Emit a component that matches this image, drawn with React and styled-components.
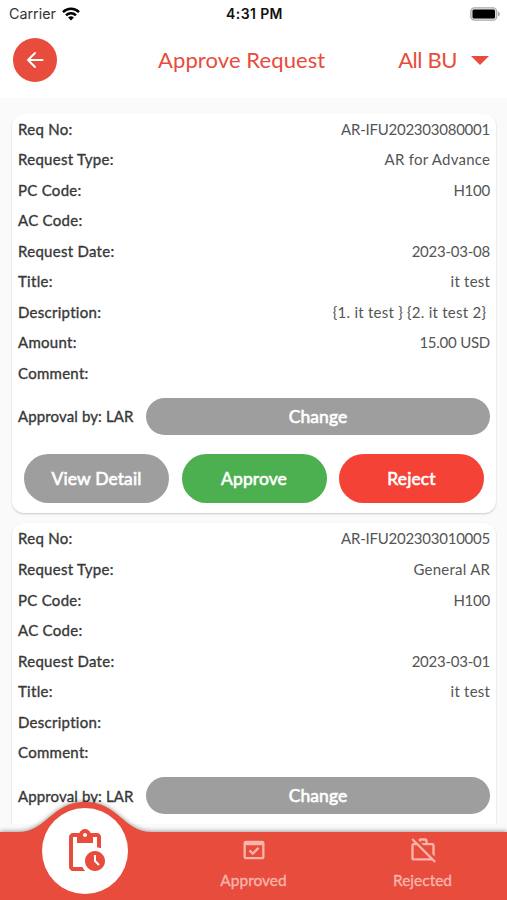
import { styled, createGlobalStyle } from "styled-components"
import { MdOutlinePendingActions, MdOutlineDomainVerification, MdOutlineWorkOff } from "react-icons/md"

const GlobalStyle = createGlobalStyle`
    * {
        box-sizing: border-box;
    }
    body {
        margin: 0;
        background: #fafafa;
        font-family: Lato, "Open Sans", sans-serif;
    }
`
const Screen = styled.div`
    height: 900px;
    width: 507px;
    display: flex;
    flex-direction: column;
    overflow: hidden;
    background: #fafafa;
`
const StatusBar = styled.div`
    height: 27px;
    flex-shrink: 0;
    display: grid;
    grid-template-columns: 1fr auto 1fr;
    align-items: center;
    padding: 0 7px 0 9px;
    background: #fff;
    font-family: Inter, "Liberation Sans", sans-serif;
    font-size: 14px;
    color: #111;
`
const Carrier = styled.div`
    display: flex;
    align-items: center;
    gap: 6px;
    font-size: 14.3px;
    color: #333;
`
const Clock = styled.div`
    font-weight: 600;
    font-size: 14px;
    letter-spacing: .4px;
`
const Battery = styled.svg`
    justify-self: end;
`
const Header = styled.header`
    height: 71px;
    flex-shrink: 0;
    display: grid;
    grid-template-columns: 145px 1fr auto;
    align-items: center;
    padding: 0 18px 5px 13px;
    background: #fff;
    color: #e74c3c;
    font-size: 22px;
`
const BackButton = styled.button`
    width: 44px;
    height: 44px;
    border: 0;
    padding: 0;
    border-radius: 50%;
    background: #e74c3c;
    display: flex;
    align-items: center;
    justify-content: center;
`
const Title = styled.div`
    letter-spacing: .1px;
    padding-bottom: 2px;
`
const UnitSelect = styled.div`
    display: flex;
    align-items: center;
    gap: 14px;
    letter-spacing: -.4px;
    span {
        padding-bottom: 2px;
    }
`
const List = styled.main`
    height: 726px;
    flex-shrink: 0;
    overflow: hidden;
    padding: 15.5px 11px 0 12px;
    display: flex;
    flex-direction: column;
    gap: 10px;
`
const Card = styled.section`
    flex-shrink: 0;
    min-height: 330px;
    background: #fff;
    border-radius: 12px;
    padding: 0 6px 10px;
    box-shadow: 0 1px 2px rgba(0, 0, 0, .2);
`
const Row = styled.div`
    height: 30.55px;
    display: flex;
    justify-content: space-between;
    font-size: 15px;
    line-height: 30px;
    white-space: pre;
`
const Label = styled.div`
    color: #383838;
    -webkit-text-stroke: .35px #383838;
    font-size: 15px;
    letter-spacing: ${props => props.$tight ? ".12px" : ".28px"};
    white-space: nowrap;
`
const Value = styled.div`
    color: #555;
    letter-spacing: ${props => props.$numeric ? "-.24px" : ".25px"};
    margin-right: ${props => props.$numeric ? "0" : "-.25px"};
`
const ApprovalRow = styled.div`
    display: flex;
    align-items: center;
    justify-content: space-between;
    margin-top: 9.5px;
`
const Button = styled.button`
    border: 0;
    padding: 0;
    border-radius: 25px;
    color: #fff;
    font-family: inherit;
    font-size: 17.5px;
    letter-spacing: .1px;
    -webkit-text-stroke: .6px #fff;
    background: ${props => props.$color || "#9e9e9e"};
    width: ${props => props.$wide ? "344px" : "145px"};
    height: ${props => props.$wide ? "37px" : "49px"};
`
const Actions = styled.div`
    display: flex;
    justify-content: space-between;
    padding: 0 6px;
    margin-top: 19.5px;
`
const NavBar = styled.nav`
    position: relative;
    height: 76px;
    flex-shrink: 0;
    padding-top: 8px;
    display: grid;
    grid-template-columns: repeat(3, 1fr);
`
const NavShape = styled.svg`
    position: absolute;
    left: 0;
    bottom: 0;
    overflow: visible;
    filter: drop-shadow(0 -1px 2px rgba(0, 0, 0, .35));
`
const NavItem = styled.div`
    position: relative;
    display: flex;
    flex-direction: column;
    align-items: center;
    padding-top: 4px;
    gap: 6px;
    color: #f9b4ac;
    font-size: 15.5px;
    line-height: 20px;
    -webkit-text-stroke: .35px #f9b4ac;
`
const ActiveItem = styled.div`
    position: absolute;
    left: 42px;
    top: -16px;
    width: 86px;
    height: 86px;
    border-radius: 50%;
    background: #fff;
    color: #e74c3c;
    display: flex;
    align-items: center;
    justify-content: center;
`

const requests = [
    {
        actions: true,
        fields: [
            ["Req No:", "AR-IFU202303080001"],
            ["Request Type:", "AR for Advance"],
            ["PC Code:", "H100"],
            ["AC Code:", ""],
            ["Request Date:", "2023-03-08"],
            ["Title:", "it test"],
            ["Description:", "{1. it test } {2. it test 2} "],
            ["Amount:", "15.00 USD"],
            ["Comment:", ""],
        ],
    },
    {
        actions: false,
        fields: [
            ["Req No:", "AR-IFU202303010005"],
            ["Request Type:", "General AR"],
            ["PC Code:", "H100"],
            ["AC Code:", ""],
            ["Request Date:", "2023-03-01"],
            ["Title:", "it test"],
            ["Description:", ""],
            ["Comment:", ""],
        ],
    },
]

function RequestCard({ request }) {
    return (
        <Card>
            {request.fields.map(([label, value]) => (
                <Row key={label}>
                    <Label>{label}</Label>
                    <Value $numeric={/\d\d/.test(value)}>{value}</Value>
                </Row>
            ))}
            <ApprovalRow>
                <Label $tight>Approval by: LAR</Label>
                <Button $wide>Change</Button>
            </ApprovalRow>
            {request.actions && (
                <Actions>
                    <Button>View Detail</Button>
                    <Button $color="#4caf50">Approve</Button>
                    <Button $color="#f44336">Reject</Button>
                </Actions>
            )}
        </Card>
    )
}

export default function App() {
    return (
        <>
            <GlobalStyle />
            <Screen>
                <StatusBar>
                    <Carrier>
                        Carrier
                        <svg width="18" height="14" viewBox="0 0 18 14" fill="none" stroke="#000" strokeWidth="2.5">
                            <path d="M1 5.1a11.4 11.4 0 0 1 16 0" />
                            <path d="M4 8.3a7.1 7.1 0 0 1 10 0" />
                            <path d="M9 13.5 6.1 10.6a4.1 4.1 0 0 1 5.8 0z" fill="#000" stroke="none" />
                        </svg>
                    </Carrier>
                    <Clock>4:31 PM</Clock>
                    <Battery width="30" height="14" viewBox="0 0 30 14">
                        <rect x=".75" y=".75" width="26" height="12.5" rx="3.8" fill="#ddd" stroke="#aaa" strokeWidth="1.2" />
                        <rect x="2.5" y="2.5" width="22.5" height="9" rx="1.5" fill="#000" />
                        <path d="M28 4.5c2.4 1 2.4 4 0 5z" fill="#aaa" />
                    </Battery>
                </StatusBar>
                <Header>
                    <BackButton>
                        <svg width="18" height="18" viewBox="0 0 18 18" fill="none" stroke="#fff" strokeWidth="2" strokeLinecap="round">
                            <path d="M16.5 9H2M9 2 2 9l7 7" />
                        </svg>
                    </BackButton>
                    <Title>Approve Request</Title>
                    <UnitSelect>
                        <span>All BU</span>
                        <svg width="18" height="9" viewBox="0 0 18 9">
                            <path d="M0 0h18L9 9z" fill="#e74c3c" />
                        </svg>
                    </UnitSelect>
                </Header>
                <List>
                    {requests.map((request, index) => (
                        <RequestCard key={index} request={request} />
                    ))}
                </List>
                <NavBar>
                    <NavShape width="507" height="68" viewBox="0 0 507 68">
                        <path d="M0 0H18C47 0 51-30 85-30S123 0 152 0H507V68H0Z" fill="#e74c3c" />
                    </NavShape>
                    <ActiveItem>
                        <MdOutlinePendingActions size={48} />
                    </ActiveItem>
                    <NavItem />
                    <NavItem>
                        <MdOutlineDomainVerification size={28} />
                        Approved
                    </NavItem>
                    <NavItem>
                        <MdOutlineWorkOff size={28} />
                        Rejected
                    </NavItem>
                </NavBar>
            </Screen>
        </>
    )
}
